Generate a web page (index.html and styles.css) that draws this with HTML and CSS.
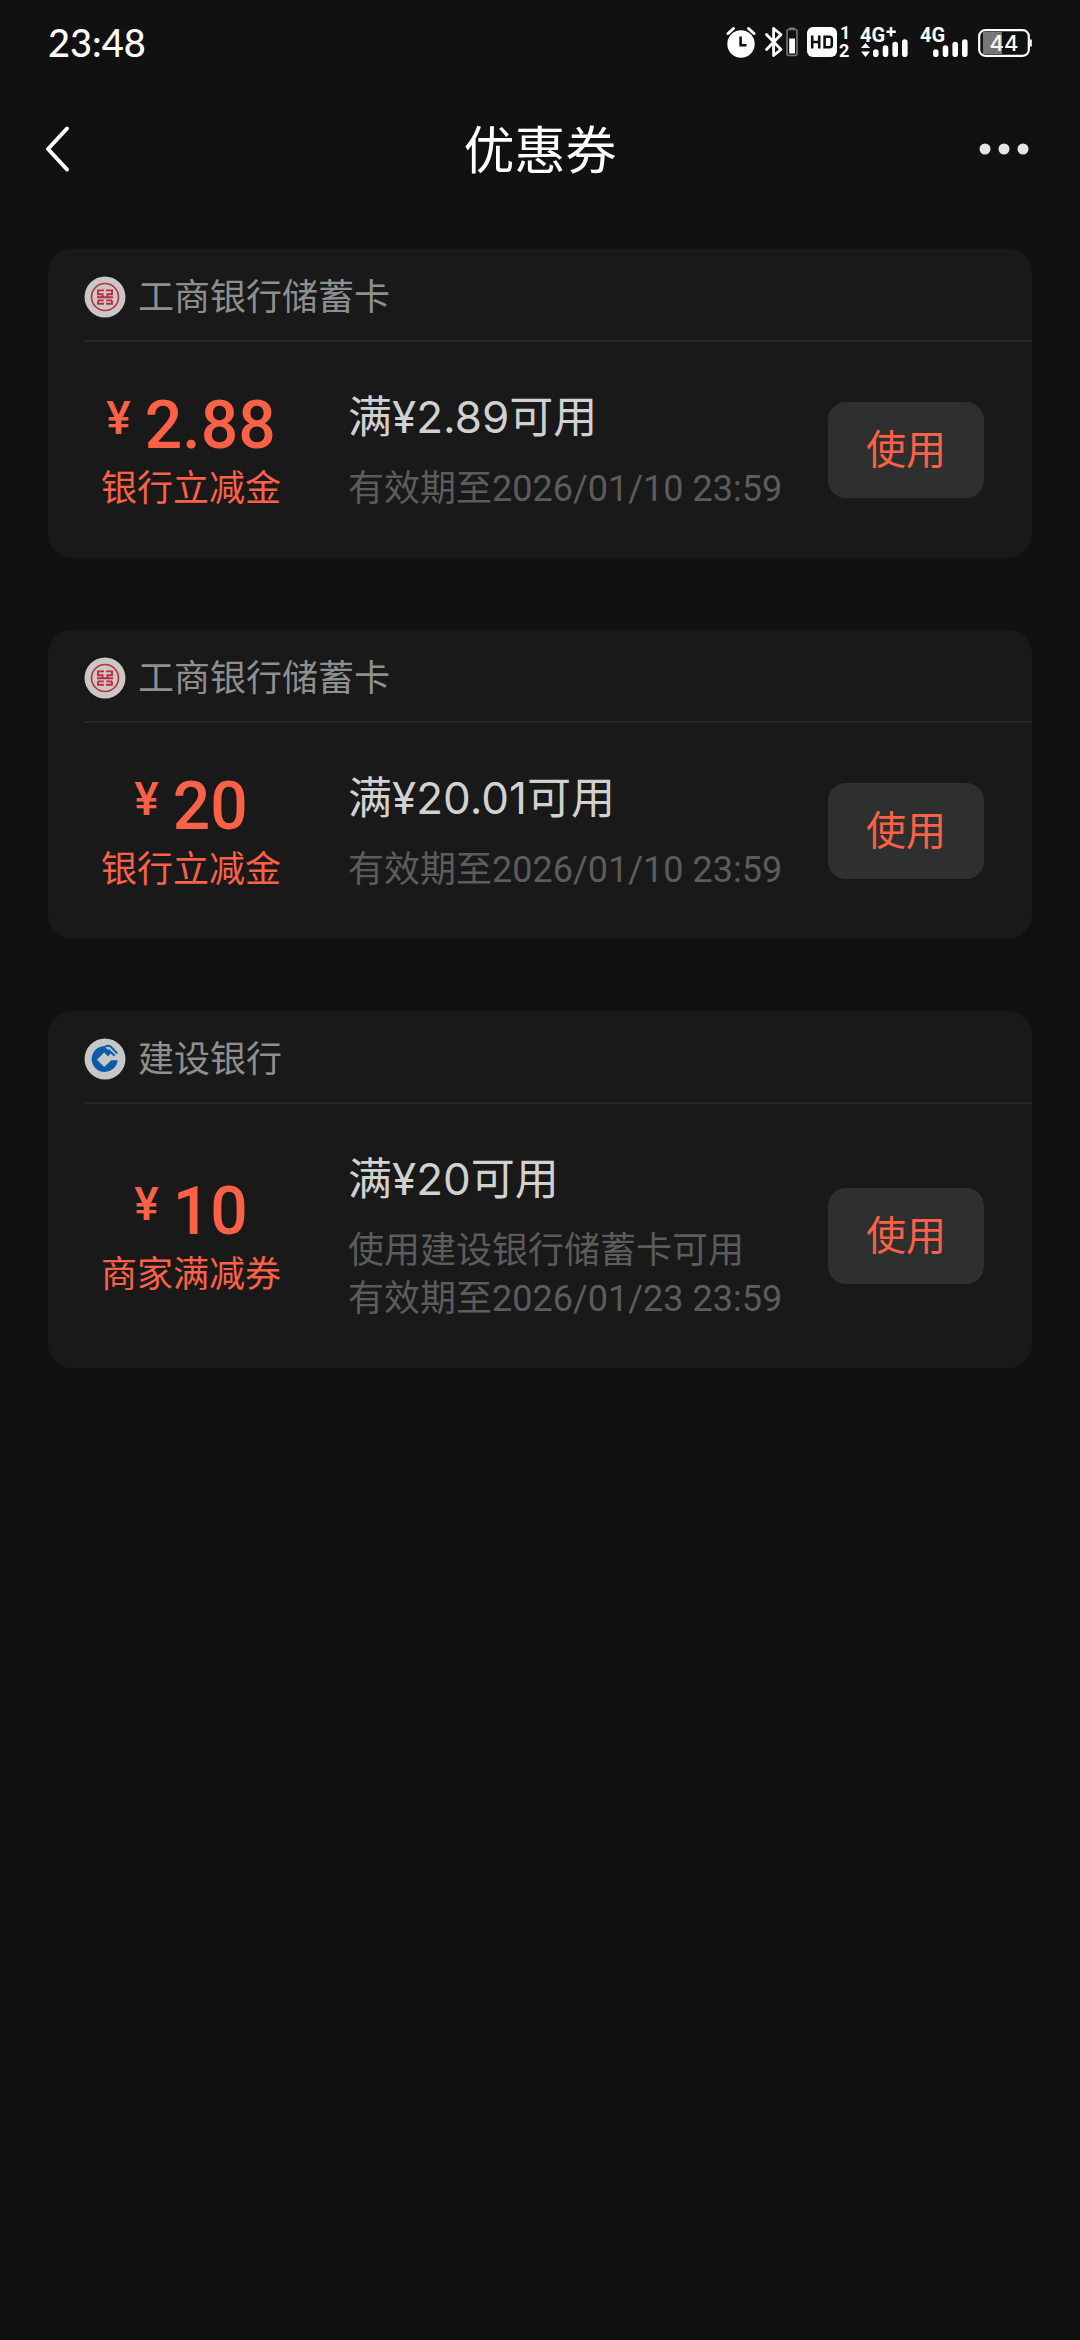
FILE: index.html
```html
<!DOCTYPE html>
<html lang="zh-CN">
<head>
<meta charset="utf-8">
<meta name="viewport" content="width=device-width, initial-scale=1">
<title>优惠券</title>
<link rel="stylesheet" href="styles.css">
</head>
<body>
<svg class="symbols" aria-hidden="true">
  <symbol id="icbc" viewBox="0 0 42 42">
    <circle cx="21" cy="21" r="20.5" fill="#c9c8c6"/>
    <g fill="none" stroke="#c22b3b">
      <circle cx="21" cy="21" r="13.5" stroke-width="1.6"/>
      <path d="M20 14.4H14V18.2H18.6V21M22 14.4H28V18.2H23.4V21M20 27.8H14V24.4M22 27.8H28V24.4M13 21.2H29M14 24.4H19.8M28 24.4H22.2" stroke-width="1.9"/>
    </g>
  </symbol>
  <symbol id="ccb" viewBox="0 0 42 42">
    <circle cx="21" cy="21" r="20.5" fill="#c6c7c9"/>
    <path d="M24.5 8.6A13 13 0 1 0 33.6 22.2H27.2L20.2 29L13 21.8L20.2 14.6L24 18.2L27.8 14.4L23 9.6Z" fill="#0d5aa7"/>
    <path d="M21.5 8.2Q24 7.2 26.4 8.4L33.2 15.4" fill="none" stroke="#0d5aa7" stroke-width="2"/>
    <path d="M22 9L31 18" stroke="#c6c7c9" stroke-width="1.2"/>
    <path d="M24.4 11.6L30.6 17.8" stroke="#0d5aa7" stroke-width="2"/>
  </symbol>
</svg>

<header class="top">
  <div class="status">
    <time class="clock">23:48</time>
    <div class="indicators">
      <svg width="30" height="32" viewBox="0 0 30 32" aria-label="闹钟">
        <circle cx="15" cy="18" r="13.7" fill="#fff"/>
        <path d="M2 7.5L7.5 2.5M28 7.5L22.5 2.5" stroke="#fff" stroke-width="3" stroke-linecap="round"/>
        <path d="M14.6 10.5V19.2H20.5" fill="none" stroke="#111" stroke-width="2.6"/>
      </svg>
      <svg width="34" height="32" viewBox="0 0 34 32" aria-label="蓝牙">
        <path d="M2.5 8.5L17 23.5L9.6 29.5V2.5L17 8.5L2.5 23.5" fill="none" stroke="#fff" stroke-width="2.8" stroke-linejoin="round" stroke-linecap="round"/>
        <path d="M25 1.5h6v2h-6z" fill="#777"/>
        <rect x="23" y="3.5" width="10" height="26" rx="1.5" fill="none" stroke="#777" stroke-width="1.6"/>
        <rect x="25.2" y="12.5" width="5.8" height="15" fill="#fff"/>
      </svg>
      <svg width="44" height="32" viewBox="0 0 44 32" aria-label="HD">
        <rect x="1" y="1" width="30" height="30" rx="6" fill="#fff"/>
        <path d="M6.2 9.5V22.5M13.2 9.5V22.5M6.2 16H13.2M18.6 10.7V21.3H23.4Q25.8 21.3 25.8 19V13Q25.8 10.7 23.4 10.7Z" fill="none" stroke="#111" stroke-width="2.6"/>
        <text class="sim" x="34" y="13">1</text>
        <text class="sim" x="33" y="31">2</text>
      </svg>
      <svg width="50" height="32" viewBox="0 0 50 32" aria-label="4G+ 信号">
        <text class="net" x="2" y="16">4G</text>
        <path d="M33 1V10.5M28.5 5.8H37.8" stroke="#fff" stroke-width="2.6"/>
        <path d="M3 22L7.5 17L12 22ZM3 25.5L7.5 31L12 25.5Z" fill="#fff"/>
        <path d="M17.8 26V28.2M27.5 22V28.2M37.2 18.5V28.2M46.8 16V28.2" stroke="#fff" stroke-width="5.6" stroke-linecap="round"/>
      </svg>
      <svg width="54" height="32" viewBox="0 0 54 32" aria-label="4G 信号">
        <text class="net" x="4" y="16">4G</text>
        <path d="M19.8 26V28.2M29.5 22V28.2M39.2 18.5V28.2M48.8 16V28.2" stroke="#fff" stroke-width="5.6" stroke-linecap="round"/>
      </svg>
      <svg width="54" height="32" viewBox="0 0 54 32" aria-label="电量 44%">
        <rect x="5" y="6" width="19" height="22" fill="#777"/>
        <rect x="1.2" y="4.2" width="49.6" height="25.6" rx="6" fill="none" stroke="#fff" stroke-width="2.2"/>
        <path d="M52.8 13.5V20.5" stroke="#fff" stroke-width="2"/>
        <text class="charge" x="26" y="25" text-anchor="middle">44</text>
      </svg>
    </div>
  </div>
  <nav class="nav">
    <button class="icon-button back" type="button" aria-label="返回">
      <svg width="26" height="48" viewBox="0 0 26 48"><path d="M23 3.5L4 24L23 44.5" fill="none" stroke="#fff" stroke-width="4" stroke-linecap="round" stroke-linejoin="round"/></svg>
    </button>
    <h1 class="title">优惠券</h1>
    <button class="icon-button more" type="button" aria-label="更多">
      <svg width="58" height="12" viewBox="0 0 58 12" fill="#e6e6e6"><circle cx="7" cy="6" r="5.5"/><circle cx="26" cy="6" r="5.5"/><circle cx="45" cy="6" r="5.5"/></svg>
    </button>
  </nav>
</header>

<main class="coupons">
  <article class="coupon">
    <h2 class="bank"><svg class="logo" aria-hidden="true"><use href="#icbc"/></svg>工商银行储蓄卡</h2>
    <div class="body">
      <div class="value">
        <p class="amount"><span class="yen">¥</span>2.88</p>
        <p class="kind">银行立减金</p>
      </div>
      <div class="terms">
        <h3 class="rule">满¥2.89可用</h3>
        <p class="note">有效期至2026/01/10 23:59</p>
      </div>
      <button class="use" type="button">使用</button>
    </div>
  </article>

  <article class="coupon">
    <h2 class="bank"><svg class="logo" aria-hidden="true"><use href="#icbc"/></svg>工商银行储蓄卡</h2>
    <div class="body">
      <div class="value">
        <p class="amount"><span class="yen">¥</span>20</p>
        <p class="kind">银行立减金</p>
      </div>
      <div class="terms">
        <h3 class="rule">满¥20.01可用</h3>
        <p class="note">有效期至2026/01/10 23:59</p>
      </div>
      <button class="use" type="button">使用</button>
    </div>
  </article>

  <article class="coupon">
    <h2 class="bank"><svg class="logo" aria-hidden="true"><use href="#ccb"/></svg>建设银行</h2>
    <div class="body">
      <div class="value">
        <p class="amount"><span class="yen">¥</span>10</p>
        <p class="kind">商家满减券</p>
      </div>
      <div class="terms">
        <h3 class="rule">满¥20可用</h3>
        <p class="note">使用建设银行储蓄卡可用</p>
        <p class="note">有效期至2026/01/23 23:59</p>
      </div>
      <button class="use" type="button">使用</button>
    </div>
  </article>
</main>
</body>
</html>
```
FILE: styles.css
```css
* {
  box-sizing: border-box;
}

body {
  margin: 0;
  min-height: 100vh;
  background: #111;
  color: #d1d1d1;
  font-family: Inter, "Noto Sans CJK SC", sans-serif;
}

h1, h2, h3, p {
  margin: 0;
  font-weight: 400;
}

button {
  border: 0;
  padding: 0;
  font: inherit;
  cursor: pointer;
}

svg {
  display: block;
  overflow: visible;
}

.symbols {
  position: absolute;
  width: 0;
  height: 0;
}

.status {
  display: flex;
  align-items: center;
  justify-content: space-between;
  height: 84px;
  padding: 0 48px;
}

.clock {
  color: #fff;
  font: 500 38px/48px Lato, sans-serif;
}

.indicators {
  display: flex;
  gap: 8px;
}

.net, .sim, .charge {
  fill: #fff;
  font-family: Roboto, sans-serif;
  font-weight: 700;
}

.net {
  font-size: 20px;
}

.sim {
  font-size: 18px;
}

.charge {
  font-family: Inter, sans-serif;
  font-size: 22px;
  font-weight: 500;
}

.nav {
  display: grid;
  grid-template-columns: 96px 1fr 96px;
  align-items: center;
  height: 130px;
  padding: 0 44px;
}

.icon-button {
  display: flex;
  align-items: center;
  height: 96px;
  background: none;
}

.more {
  justify-content: flex-end;
}

.title {
  padding-top: 4px;
  color: #fff;
  font-size: 51px;
  line-height: 72px;
  text-align: center;
}

.coupons {
  display: flex;
  flex-direction: column;
  gap: 72px;
  padding: 35px 48px 72px;
}

.coupon {
  border-radius: 24px;
  background: #191919;
}

.bank {
  display: flex;
  align-items: center;
  gap: 12px;
  height: 93px;
  margin-left: 36px;
  padding-top: 4px;
  border-bottom: 2px solid #262626;
  color: #8f8f8f;
  font-size: 36px;
  line-height: 48px;
}

.logo {
  width: 42px;
  height: 42px;
}

.body {
  display: grid;
  grid-template-columns: 214px 1fr 156px;
  align-items: center;
  padding: 45px 48px 45px 36px;
}

.value {
  color: #fa6147;
  text-align: center;
}

.amount {
  display: flex;
  justify-content: center;
  gap: 14px;
  font: 500 66px/76px Roboto, sans-serif;
}

.yen {
  font-size: 46px;
  line-height: 60px;
}

.kind {
  font-size: 36px;
  line-height: 48px;
}

.terms {
  padding-left: 50px;
  white-space: nowrap;
}

.rule {
  margin-bottom: 18px;
  font-size: 44px;
  line-height: 60px;
}

.note {
  color: #5c5c5c;
  font-family: Roboto, "Noto Sans CJK SC", sans-serif;
  font-size: 36px;
  line-height: 48px;
}

.use {
  height: 96px;
  padding-bottom: 6px;
  border-radius: 18px;
  background: #2e3030;
  color: #fa6147;
  font-size: 40px;
}
```
